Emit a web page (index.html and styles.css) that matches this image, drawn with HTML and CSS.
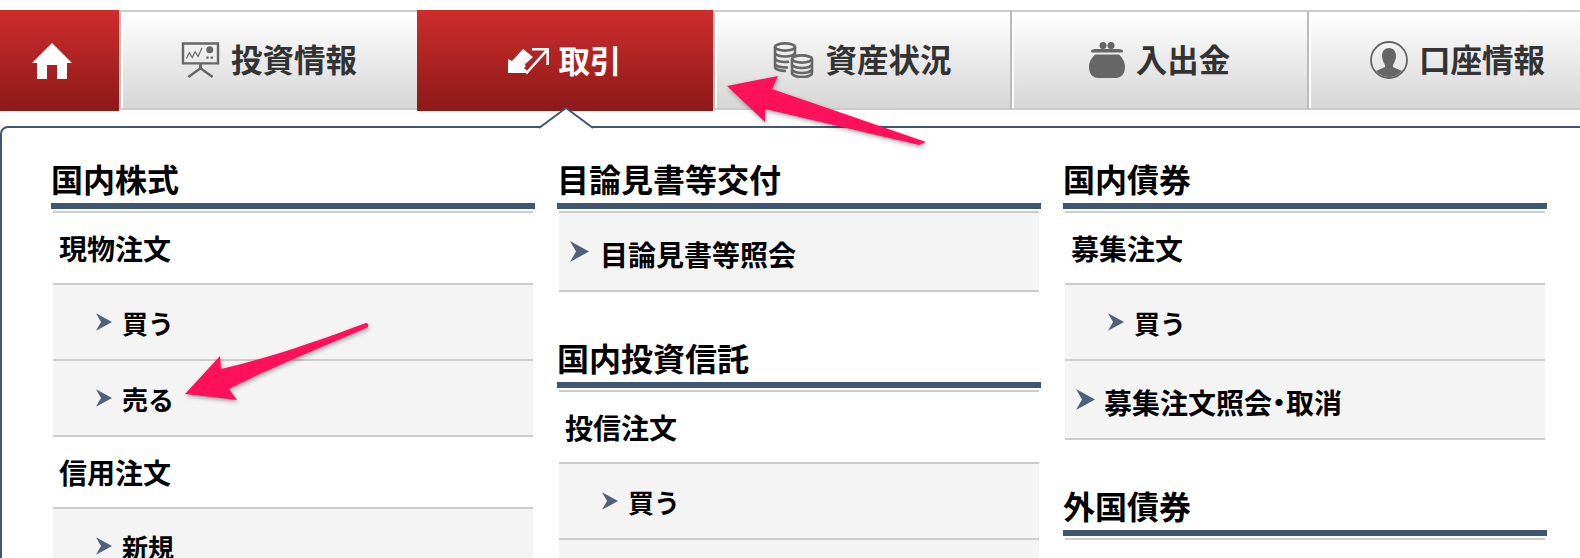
FILE: index.html
```html
<!DOCTYPE html>
<html lang="ja">
<head>
<meta charset="utf-8" />
<title>取引メニュー</title>
<link rel="stylesheet" href="styles.css">
</head>
<body>
<svg class="defs" width="0" height="0">
  <symbol id="chev" viewBox="0 0 19 21"><path d="M0 0 19 10.5 0 21 6 10.5Z"/></symbol>
</svg>

<nav class="nav">
  <a class="tab tab-home is-red">
    <svg class="ico" width="40" height="36" viewBox="0 0 40 36" fill="#fff"><path d="M20 0 40 20H35V36H25V22H15V36H5V20H0Z"/></svg>
  </a>
  <a class="tab">
    <svg class="ico" width="39" height="36" viewBox="0 0 39 37" fill="none" stroke="#666">
      <path stroke-width="2.5" d="M1.5 1.5H37.5V22H1.5Z"/>
      <path stroke-width="1.2" d="M5 17 8 11 11 16 14 10 17 15 21 6"/>
      <circle cx="29" cy="8" r="3.6" fill="#666" stroke="none"/>
      <path stroke-width="2.4" stroke-dasharray="2.4 2" d="M25.500 16H33"/>
      <path stroke-width="3" d="M19.500 22V28"/>
      <path stroke-width="2.5" d="M19.500 27 7 36M19.500 27 32 36"/>
    </svg>
    <span>投資情報</span>
  </a>
  <a class="tab tab-trade is-red">
    <svg class="ico" width="42" height="28" viewBox="0 0 42 28">
      <path fill="#fff" d="M0 26V12L4 14 15 2 25 10 13 21 18 26Z"/>
      <path fill="none" stroke="#fff" stroke-width="2.600" d="M24 2.300H39.700V18M39.700 2.300 23 21 19 25.500 14 21 17 18"/>
    </svg>
    <span>取引</span>
  </a>
  <a class="tab tab-assets">
    <svg class="ico" width="41" height="36" viewBox="0 0 41 36" fill="none" stroke="#666" stroke-width="2.600">
      <ellipse cx="12" cy="5" rx="10" ry="3.600"/>
      <path d="M2 5V25C2 27 6 29 13 29M22 5V13M2 10.500C2 13 7 14.500 12 14.500S22 13 22 10.500M2 16C2 18.500 7 20 12 20 14 20 15 20 16 19.500M2 21.500C2 24 7 25.500 15 25.500"/>
      <ellipse cx="29" cy="17" rx="10" ry="3.600"/>
      <path d="M19 17V31C19 33.500 24 35 29 35S39 33.500 39 31V17M19 22C19 24.500 24 26 29 26S39 24.500 39 22M19 27C19 29.500 24 31 29 31S39 29.500 39 27"/>
    </svg>
    <span>資産状況</span>
  </a>
  <a class="tab tab-cash">
    <svg class="ico" width="36" height="36" viewBox="0 0 36 36" fill="#666">
      <circle cx="14" cy="3.500" r="3.500"/><circle cx="22" cy="3.500" r="3.500"/>
      <path d="M2 9C2 7.500 5 7 8 7H28C31 7 34 7.500 34 9S33.500 10.500 32 10.500H4C2.500 10.500 2 10.500 2 9Z"/>
      <path d="M6 12.500H30C33 16 36 19 36 25 36 32 32 36 27 36H9C4 36 0 32 0 25 0 19 3 16 6 12.500Z"/>
    </svg>
    <span>入出金</span>
  </a>
  <a class="tab tab-account">
    <svg class="ico" width="38" height="38" viewBox="0 0 38 38">
      <defs><clipPath id="face"><circle cx="19" cy="19" r="17"/></clipPath></defs>
      <circle cx="19" cy="19" r="18" fill="none" stroke="#666" stroke-width="1.800"/>
      <path clip-path="url(#face)" fill="#666" d="M19 7C24 7 26 11 26 15 26 19 24 22 23 24V26L32 30 36 38H2L6 30 15 26V24C14 22 12 19 12 15 12 11 14 7 19 7Z"/>
    </svg>
    <span>口座情報</span>
  </a>
</nav>

<main class="panel">
  <svg class="caret" width="56" height="22" viewBox="0 0 56 22">
    <path fill="#fff" stroke="#3f5772" stroke-width="2" d="M1 21 28 1 55 21"/>
  </svg>

  <div class="col">
    <section class="group">
      <h2>国内株式</h2>
      <ul class="list">
        <li class="row-head">現物注文</li>
        <li class="row-sub"><svg class="chev"><use href="#chev"/></svg>買う</li>
        <li class="row-sub"><svg class="chev"><use href="#chev"/></svg>売る</li>
        <li class="row-head">信用注文</li>
        <li class="row-sub"><svg class="chev"><use href="#chev"/></svg>新規</li>
      </ul>
    </section>
  </div>

  <div class="col">
    <section class="group">
      <h2>目論見書等交付</h2>
      <ul class="list">
        <li class="row-link"><svg class="chev"><use href="#chev"/></svg>目論見書等照会</li>
      </ul>
    </section>
    <section class="group">
      <h2>国内投資信託</h2>
      <ul class="list">
        <li class="row-head">投信注文</li>
        <li class="row-sub"><svg class="chev"><use href="#chev"/></svg>買う</li>
        <li class="row-sub"></li>
      </ul>
    </section>
  </div>

  <div class="col">
    <section class="group">
      <h2>国内債券</h2>
      <ul class="list">
        <li class="row-head">募集注文</li>
        <li class="row-sub"><svg class="chev"><use href="#chev"/></svg>買う</li>
        <li class="row-link"><svg class="chev"><use href="#chev"/></svg>募集注文照会<span class="dot">・</span>取消</li>
      </ul>
    </section>
    <section class="group">
      <h2>外国債券</h2>
      <ul class="list"></ul>
    </section>
  </div>
</main>

<!-- annotation arrows drawn on top of the screenshot -->
<svg class="notes" width="1580" height="558" viewBox="0 0 1580 558">
  <path d="M727 86 778 76 772 89 926 142 919 145 765 109 765 122Z"/>
  <path d="M185 394 220 356 221 369C270 358 320 340 366 323 369 323 369 327 366 328 320 348 270 368 229 389L237 400Z"/>
</svg>
</body>
</html>
```

FILE: styles.css
```css
html, body { margin: 0; height: 558px; overflow: hidden; background: #fff; }
body { position: relative; font-family: "Noto Sans CJK JP", "Noto Sans", sans-serif; color: #000; }
.defs { position: absolute; }

.nav { display: flex; height: 101px; margin-top: 10px; }
.tab { box-sizing: border-box; width: 298px; height: 100px; display: flex; align-items: center; justify-content: center; gap: 11px; font-size: 31.5px; font-weight: bold; color: #333; border-top: 2px solid #ccc; border-bottom: 2px solid #ccc; border-left: 2px solid #bbb; box-shadow: inset 2px 0 0 #fff; background: linear-gradient(#fff, #d6d6d6); }
.tab span { margin-bottom: 4px; }
.tab.is-red { border: 0; height: 101px; box-shadow: none; color: #fff; background: linear-gradient(#ce2d2c, #8d1919); }
.tab-home { width: 119px; justify-content: flex-start; padding-left: 32px; }
.tab-trade { width: 296px; gap: 8px; }
.tab-assets { width: 297px; }
.tab-cash { width: 297px; }
.tab-account { flex: 1; padding-left: 26px; }

.panel { position: relative; display: grid; grid-template-columns: 484px 484px 484px; column-gap: 22px; box-sizing: border-box; width: 1600px; margin-top: 15px; padding: 31px 0 0 49px; border: 2px solid #3f5772; border-radius: 8px 8px 0 0; }
.caret { position: absolute; left: 536px; top: -21px; }

.group + .group { margin-top: 46px; }
h2 { margin: 0; height: 50px; box-sizing: border-box; line-height: 38px; font-size: 32px; font-weight: bold; border-bottom: 6px solid #3f5772; }
.list { list-style: none; margin: 2px 2px 0; padding: 0; border-top: 2px solid #ccc; }
.list li { box-sizing: border-box; display: flex; align-items: center; border-bottom: 2px solid #ccc; font-weight: bold; }
.row-head { height: 72px; padding-left: 6px; font-size: 28px; }
.row-sub { height: 76px; padding-left: 43px; font-size: 26px; background: #f4f4f4; }
.row-link { height: 79px; padding: 4px 0 0 11px; font-size: 28px; background: #f4f4f4; }
.dot { font-feature-settings: "palt"; }

.chev { width: 16px; height: 18px; margin-right: 10px; fill: #50607a; flex: none; }
.row-link .chev { width: 19px; height: 21px; margin-right: 11px; margin-top: -5px; }
.col:last-child .row-link .chev { margin-right: 9px; }

.notes { position: absolute; left: 0; top: 0; fill: #fe115a; filter: drop-shadow(1px 2px 2px rgba(0, 0, 0, .35)); }
```
